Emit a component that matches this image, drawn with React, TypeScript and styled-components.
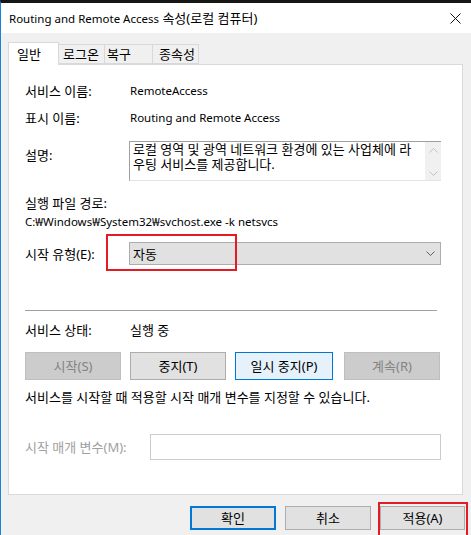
import React from "react";
import styled, { createGlobalStyle } from "styled-components";

const GlobalStyle = createGlobalStyle`
  html, body {
    margin: 0;
    padding: 0;
    background: #f0f0f0;
  }
  * {
    box-sizing: border-box;
  }
`;

// Latin glyphs come from Noto Sans, Hangul from Noto Sans CJK KR
const FONT = `"Noto Sans", "Noto Sans CJK KR", sans-serif`;

const Window = styled.div`
  position: relative;
  width: 471px;
  height: 535px;
  overflow: hidden;
  background: #f0f0f0;
  border-top: 3px solid #161616;
  border-left: 1px solid #1883d7;
  font-family: ${FONT};
  font-size: 13px;
  color: #000;
  display: flex;
  flex-direction: column;
`;

// latin runs are set a touch smaller so they keep Segoe UI's width
const Latin = styled.span`
  font-size: 11.5px;
`;

const TitleBar = styled.div`
  height: 30px;
  flex-shrink: 0;
  background: #fff;
  display: flex;
  align-items: center;
  justify-content: space-between;
  padding: 0 10px 0 8px;
`;

const Title = styled.span`
  line-height: 16px;
  white-space: nowrap;
`;

const Body = styled.div`
  padding: 9px 0 0 7px;
`;

const TabRow = styled.div`
  display: flex;
  align-items: flex-end;
  height: 22px;
`;

const Tab = styled.div<{ $active?: boolean; $w: number; $pad: number }>`
  width: ${(p) => p.$w}px;
  padding-left: ${(p) => p.$pad}px;
  height: ${(p) => (p.$active ? 23 : 20)}px;
  margin-bottom: ${(p) => (p.$active ? -1 : 0)}px;
  background: ${(p) => (p.$active ? "#fff" : "#f0f0f0")};
  border: 1px solid #d9d9d9;
  border-bottom: ${(p) => (p.$active ? "none" : "1px solid #d9d9d9")};
  border-left: ${(p) => (p.$active ? "1px solid #d9d9d9" : "none")};
  position: relative;
  z-index: ${(p) => (p.$active ? 2 : 1)};
  display: flex;
  align-items: ${(p) => (p.$active ? "flex-start" : "center")};
  padding-top: ${(p) => (p.$active ? 3 : 0)}px;
  line-height: 16px;
  white-space: nowrap;
`;

const Panel = styled.div`
  width: 455px;
  height: 431px;
  background: #fff;
  border: 1px solid #d9d9d9;
  padding: 0 20px 0 16px;
  position: relative;
  z-index: 1;
`;

const Row = styled.div<{ $top: number; $align?: string }>`
  display: flex;
  align-items: ${(p) => p.$align || "center"};
  margin-top: ${(p) => p.$top}px;
  line-height: 16px;
`;

const Label = styled.div<{ $w?: number; $muted?: boolean; $offset?: number }>`
  width: ${(p) => (p.$w ? `${p.$w}px` : "auto")};
  flex-shrink: 0;
  color: ${(p) => (p.$muted ? "#a0a0a0" : "#000")};
  padding-top: ${(p) => p.$offset || 0}px;
  white-space: nowrap;
`;

const Value = styled.div<{ $latin?: boolean }>`
  font-size: ${(p) => (p.$latin ? "11.5px" : "inherit")};
  white-space: nowrap;
`;

const TextArea = styled.div`
  display: flex;
  width: 312px;
  height: 40px;
  border-top: 1px solid #a0a0a0;
  border-left: 1px solid #a0a0a0;
  border-bottom: 1px solid #e3e3e3;
`;

const TextAreaText = styled.div`
  flex: 1;
  padding: 0 5px 0 3px;
  line-height: 15px;
  word-break: break-all;
`;

const ScrollBar = styled.div`
  width: 16px;
  background: #f0f0f0;
  display: flex;
  flex-direction: column;
  justify-content: space-between;
  align-items: center;
  padding: 6px 0 4px;
`;

const Combo = styled.div`
  width: 312px;
  height: 23px;
  background: #e1e1e1;
  border: 1px solid #adadad;
  display: flex;
  align-items: center;
  justify-content: space-between;
  padding: 0 5px 0 3px;
`;

const Separator = styled.div<{ $top: number }>`
  margin-top: ${(p) => p.$top}px;
  width: 412px;
  height: 1px;
  background: #a0a0a0;
`;

const ButtonRow = styled.div<{ $top: number }>`
  display: flex;
  gap: 9px;
  margin-top: ${(p) => p.$top}px;
`;

type BtnKind = "normal" | "disabled" | "focus" | "default";

const Button = styled.div<{ $kind?: BtnKind; $w: number; $h: number; $ml?: number }>`
  width: ${(p) => p.$w}px;
  height: ${(p) => p.$h}px;
  margin-left: ${(p) => p.$ml || 0}px;
  display: flex;
  align-items: center;
  justify-content: center;
  line-height: 16px;
  white-space: nowrap;
  background: ${(p) =>
    p.$kind === "disabled" ? "#cccccc" : p.$kind === "focus" ? "#e5f1fb" : "#e1e1e1"};
  color: ${(p) => (p.$kind === "disabled" ? "#838383" : "#000")};
  border: ${(p) =>
    p.$kind === "disabled"
      ? "1px solid #bfbfbf"
      : p.$kind === "focus"
      ? "1px solid #0078d7"
      : p.$kind === "default"
      ? "2px solid #0078d7"
      : "1px solid #adadad"};
`;

const Input = styled.div`
  width: 291px;
  height: 26px;
  border: 1px solid #cccccc;
  background: #fff;
`;

const Footer = styled.div`
  display: flex;
  justify-content: flex-end;
  gap: 9px;
  padding: 11px 6px 0 0;
`;

const Marker = styled.div<{ $x: number; $y: number; $w: number; $h: number }>`
  position: absolute;
  left: ${(p) => p.$x}px;
  top: ${(p) => p.$y}px;
  width: ${(p) => p.$w}px;
  height: ${(p) => p.$h}px;
  border: 2px solid #e31b23;
  pointer-events: none;
  z-index: 5;
`;

const CloseIcon = () => (
  <svg width="11" height="11" viewBox="0 0 11 11">
    <path d="M0.5 0.5 L10.5 10.5 M10.5 0.5 L0.5 10.5" stroke="#111" strokeWidth="1" fill="none" />
  </svg>
);

const Chevron = ({ up, color = "#606060" }: { up?: boolean; color?: string }) => (
  <svg width="9" height="5" viewBox="0 0 9 5">
    <path
      d={up ? "M0.5 4.5 L4.5 0.5 L8.5 4.5" : "M0.5 0.5 L4.5 4.5 L8.5 0.5"}
      stroke={color}
      strokeWidth="1"
      fill="none"
    />
  </svg>
);

const App: React.FC = () => {
  return (
    <Window>
      <GlobalStyle />
      <TitleBar>
        <Title>
          <Latin>Routing and Remote Access</Latin> 속성(로컬 컴퓨터)
        </Title>
        <CloseIcon />
      </TitleBar>
      <Body>
        <TabRow>
          <Tab $active $w={51} $pad={8}>일반</Tab>
          <Tab $w={46} $pad={4}>로그온</Tab>
          <Tab $w={48} $pad={2}>복구</Tab>
          <Tab $w={46} $pad={6}>종속성</Tab>
        </TabRow>
        <Panel>
          <Row $top={18}>
            <Label $w={105}>서비스 이름:</Label>
            <Value $latin>RemoteAccess</Value>
          </Row>
          <Row $top={11}>
            <Label $w={105}>표시 이름:</Label>
            <Value $latin>Routing and Remote Access</Value>
          </Row>
          <Row $top={15} $align="flex-start">
            <Label $w={104} $offset={6}>설명:</Label>
            <TextArea>
              <TextAreaText>
                로컬 영역 및 광역 네트워크 환경에 있는 사업체에 라우팅 서비스를 제공합니다.
              </TextAreaText>
              <ScrollBar>
                <Chevron up color="#c2c2c2" />
                <Chevron color="#c2c2c2" />
              </ScrollBar>
            </TextArea>
          </Row>
          <Row $top={14}>
            <Label>실행 파일 경로:</Label>
          </Row>
          <Row $top={3}>
            <Value $latin>C:₩Windows₩System32₩svchost.exe -k netsvcs</Value>
          </Row>
          <Row $top={12}>
            <Label $w={104}>시작 유형(E):</Label>
            <Combo>
              <span>자동</span>
              <Chevron />
            </Combo>
          </Row>
          <Separator $top={45} />
          <Row $top={11}>
            <Label $w={105}>서비스 상태:</Label>
            <Value>실행 중</Value>
          </Row>
          <ButtonRow $top={14}>
            <Button $kind="disabled" $w={96} $h={28}>시작(S)</Button>
            <Button $w={96} $h={28}>중지(T)</Button>
            <Button $kind="focus" $w={98} $h={28}>일시 중지(P)</Button>
            <Button $kind="disabled" $w={96} $h={28} $ml={2}>계속(R)</Button>
          </ButtonRow>
          <Row $top={9}>
            <Value>서비스를 시작할 때 적용할 시작 매개 변수를 지정할 수 있습니다.</Value>
          </Row>
          <Row $top={29}>
            <Label $w={125} $muted>시작 매개 변수(M):</Label>
            <Input />
          </Row>
        </Panel>
      </Body>
      <Footer>
        <Button $kind="default" $w={86} $h={24}>확인</Button>
        <Button $w={86} $h={24}>취소</Button>
        <Button $w={85} $h={24}>적용(A)</Button>
      </Footer>
      <Marker $x={105} $y={231} $w={131} $h={37} />
      <Marker $x={377} $y={499} $w={90} $h={40} />
    </Window>
  );
};

export default App;
